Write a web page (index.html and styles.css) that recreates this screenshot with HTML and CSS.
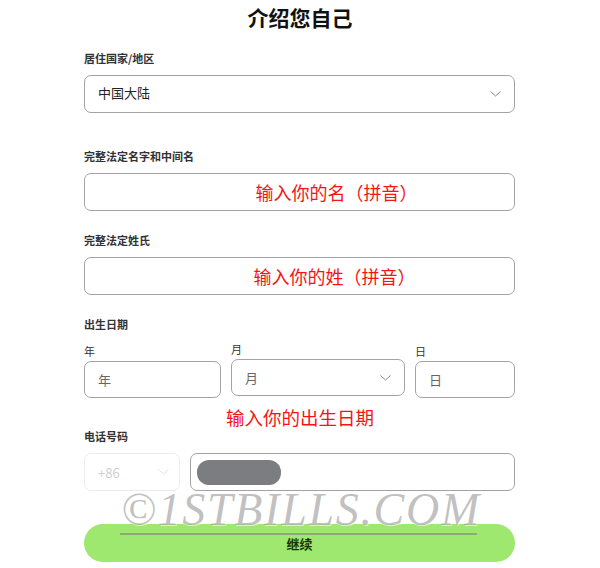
FILE: index.html
```html
<!DOCTYPE html>
<html>
<head>
    <title>介绍您自己</title>
    <meta name="viewport" content="width=device-width, initial-scale=1.0">
    <link rel="stylesheet" href="styles.css">
</head>
<body>
    <div class="page">
        <h1 class="title">介绍您自己</h1>

        <div class="form">
            <label class="field-label first">居住国家/地区</label>
            <div class="box select">
                <span class="value">中国大陆</span>
                <svg class="chevron" width="11" height="6" viewBox="0 0 11 6"><path d="M0.5 0.5 L5.5 5 L10.5 0.5" fill="none" stroke="#8a8a8a" stroke-width="1"/></svg>
            </div>

            <label class="field-label gap-lg">完整法定名字和中间名</label>
            <div class="box hint-box"><span class="hint">输入你的名（拼音）</span></div>

            <label class="field-label gap-md">完整法定姓氏</label>
            <div class="box hint-box alt"><span class="hint">输入你的姓（拼音）</span></div>

            <label class="field-label gap-md">出生日期</label>
            <div class="date-row">
                <div class="date-col">
                    <span class="sub-label">年</span>
                    <div class="box small"><span class="placeholder">年</span></div>
                </div>
                <div class="date-col raised">
                    <span class="sub-label">月</span>
                    <div class="box small select">
                        <span class="placeholder">月</span>
                        <svg class="chevron" width="11" height="6" viewBox="0 0 11 6"><path d="M0.5 0.5 L5.5 5 L10.5 0.5" fill="none" stroke="#8a8a8a" stroke-width="1"/></svg>
                    </div>
                </div>
                <div class="date-col">
                    <span class="sub-label">日</span>
                    <div class="box small"><span class="placeholder">日</span></div>
                </div>
            </div>
            <div class="date-hint">输入你的出生日期</div>

            <label class="field-label">电话号码</label>
            <div class="phone-row">
                <div class="box code">
                    <span class="code-text">+86</span>
                    <svg class="chevron" width="11" height="6" viewBox="0 0 11 6"><path d="M0.5 0.5 L5.5 5 L10.5 0.5" fill="none" stroke="#e2e2e2" stroke-width="1"/></svg>
                </div>
                <div class="box phone">
                    <span class="masked"></span>
                </div>
            </div>

            <button class="continue-btn">继续</button>
        </div>

        <div class="watermark">©1STBILLS.COM</div>
        <div class="watermark-line"></div>
    </div>
</body>
</html>
```

FILE: styles.css
```css
body {
    margin: 0;
    padding: 0;
    background-color: #ffffff;
    font-family: "Noto Sans CJK SC", "Noto Sans", sans-serif;
    color: #222;
}
.page {
    position: relative;
    width: 600px;
    height: 568px;
    overflow: hidden;
}
.title {
    margin: 0;
    font-size: 21px;
    line-height: 34px;
    font-weight: bold;
    text-align: center;
    color: #111;
}
.form {
    width: 431px;
    margin-left: 84px;
    display: flex;
    flex-direction: column;
}
.field-label {
    display: block;
    font-size: 11px;
    line-height: 16px;
    font-weight: bold;
    color: #333;
    margin-bottom: 9px;
}
.field-label.first {
    margin-top: 16px;
}
.field-label.gap-lg {
    margin-top: 35px;
}
.field-label.gap-md {
    margin-top: 21px;
}
.box {
    box-sizing: border-box;
    height: 38px;
    border: 1px solid #a3a3a3;
    border-radius: 7px;
    display: flex;
    align-items: center;
    padding: 0 13px;
    background: #fff;
}
.select {
    justify-content: space-between;
}
.value {
    font-size: 13px;
    line-height: 16px;
    color: #222;
    margin-top: -3px;
}
.chevron {
    display: block;
}
.hint-box {
    justify-content: center;
    padding: 0 0 0 74px;
}
.hint-box.alt {
    padding-left: 70px;
}
.hint {
    font-size: 18px;
    color: #f51414;
}
.date-row {
    display: grid;
    grid-template-columns: 137px 174px 1fr;
    column-gap: 10px;
    margin-top: 3px;
}
.date-col {
    display: flex;
    flex-direction: column;
}
.date-col.raised {
    margin-top: -2px;
}
.sub-label {
    font-size: 11px;
    line-height: 14px;
    color: #333;
    margin-bottom: 3px;
}
.box.small {
    height: 37px;
}
.placeholder {
    font-size: 13px;
    color: #666;
}
.date-hint {
    margin-top: 8px;
    font-size: 18.5px;
    line-height: 22px;
    color: #f51414;
    padding-left: 142px;
}
.phone-row {
    display: flex;
    gap: 10px;
}
.box.code {
    width: 96px;
    flex: none;
    border-color: #ececec;
    justify-content: space-between;
    padding-right: 10px;
}
.code-text {
    font-size: 13px;
    color: #cfcfcf;
}
.box.phone {
    flex: 1;
    padding-left: 6px;
}
.masked {
    width: 84px;
    height: 25px;
    border-radius: 12px;
    background-color: #7b7d81;
}
.continue-btn {
    margin-top: 33px;
    height: 38px;
    border: none;
    border-radius: 19px;
    background-color: #9fe870;
    font-family: "Noto Sans CJK SC", sans-serif;
    font-size: 13px;
    font-weight: bold;
    color: #163300;
}
.watermark {
    position: absolute;
    left: 121px;
    top: 490px;
    font-family: "Liberation Serif", serif;
    font-style: italic;
    font-size: 46px;
    line-height: 40px;
    letter-spacing: 1.7px;
    color: rgba(140, 140, 140, 0.55);
    text-shadow: 1px 1px 0 rgba(255, 255, 255, 0.6);
    white-space: nowrap;
}
.watermark-line {
    position: absolute;
    left: 120px;
    top: 533px;
    width: 357px;
    height: 2px;
    background-color: rgba(120, 120, 120, 0.55);
}
```
